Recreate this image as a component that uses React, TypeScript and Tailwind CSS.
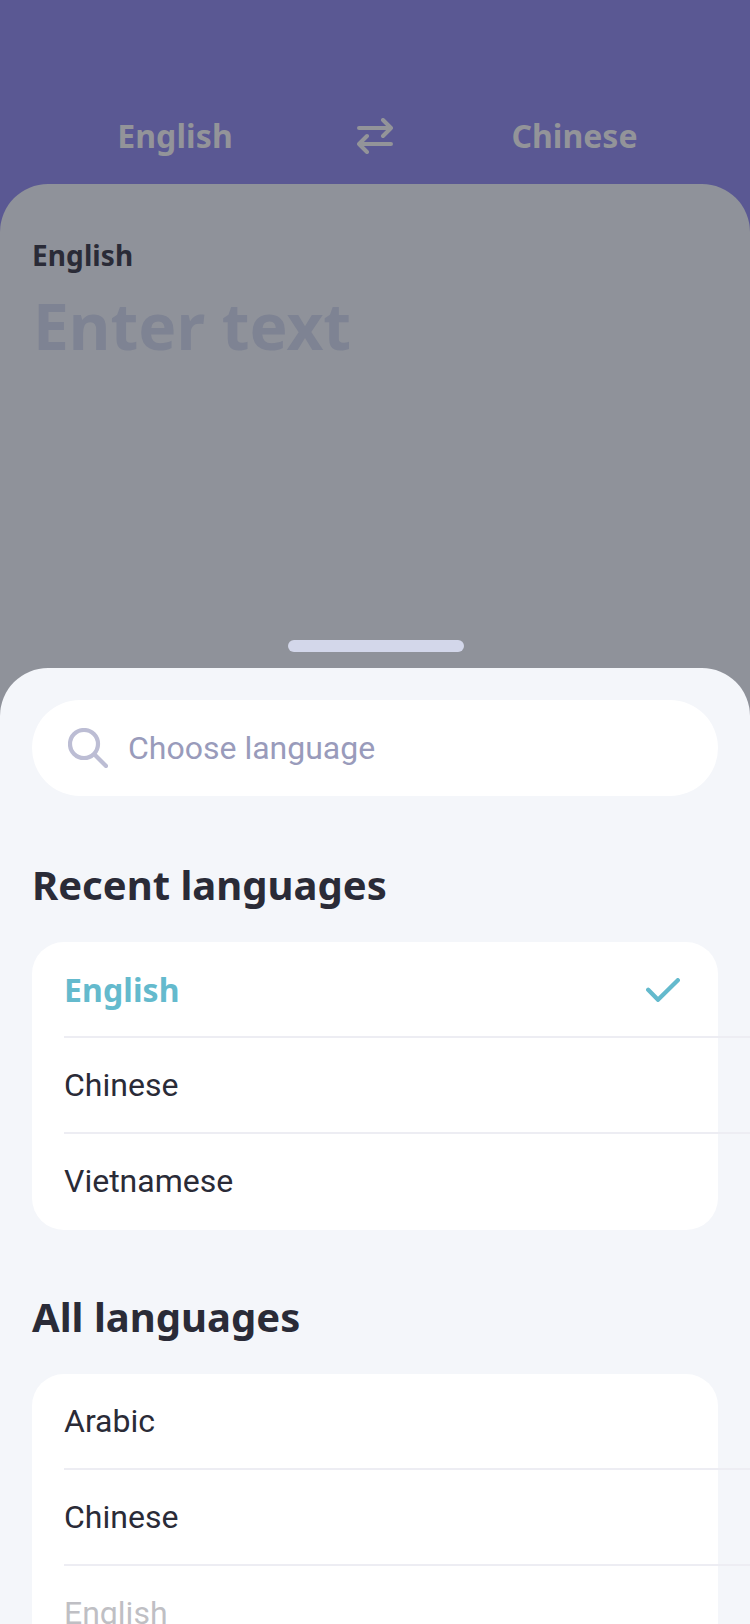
import React from "react";

type Item = { name: string; selected?: boolean; disabled?: boolean };

const recent: Item[] = [
  { name: "English", selected: true },
  { name: "Chinese" },
  { name: "Vietnamese" },
];

const all: Item[] = [
  { name: "Arabic" },
  { name: "Chinese" },
  { name: "English", disabled: true },
];

function SwapIcon() {
  return (
    <svg width="36" height="36" viewBox="0 0 36 36" fill="none" stroke="currentColor" strokeWidth="4" strokeLinecap="round" strokeLinejoin="round">
      <path d="M2 10H34M26 2L34 10L26 18" />
      <path d="M34 26H2M10 18L2 26L10 34" />
    </svg>
  );
}

function SearchIcon() {
  return (
    <svg width="40" height="40" viewBox="0 0 40 40" fill="none" stroke="#bcbdd4" strokeWidth="4.2" strokeLinecap="round">
      <circle cx="16" cy="16" r="14" />
      <path d="M26.5 26.5L38 38" />
    </svg>
  );
}

function CheckIcon() {
  return (
    <svg width="34" height="24" viewBox="0 0 34 24" fill="none" stroke="#64bacd" strokeWidth="4.3" strokeLinecap="round" strokeLinejoin="round">
      <path d="M2.2 11.8L12 21.8L31.8 2.2" />
    </svg>
  );
}

function Row({ item, last }: { item: Item; last: boolean }) {
  const tone = item.selected
    ? "font-['Noto_Sans',sans-serif] font-bold tracking-[0.1px] text-[#64bacd]"
    : item.disabled
      ? "text-[#bfbfc4]"
      : "text-[#2a2b37]";
  return (
    <li
      className={`-mr-8 ml-8 flex h-24 items-center justify-between border-b-2 pr-[70px] text-[32px] leading-[48px] ${item.selected ? "pt-0.5" : ""} ${last ? "border-transparent" : "border-[#ededf3]"}`}
    >
      <span className={tone}>{item.name}</span>
      {item.selected && <CheckIcon />}
    </li>
  );
}

function LanguageList({ items }: { items: Item[] }) {
  return (
    <ul className="mx-8 rounded-[32px] bg-white">
      {items.map((item, i) => (
        <Row key={item.name} item={item} last={i === items.length - 1} />
      ))}
    </ul>
  );
}

export default function App() {
  return (
    <div className="flex h-[1624px] w-[750px] flex-col overflow-hidden bg-[#5a5893] font-[Roboto,sans-serif]">
      <header className="flex h-[184px] shrink-0 items-center pt-[88px] font-['Noto_Sans',sans-serif] text-[32px] leading-[48px] font-bold text-[#939499]">
        <span className="w-[350px] text-center tracking-[0.1px]">English</span>
        <span className="flex w-[50px] justify-center">
          <SwapIcon />
        </span>
        <span className="w-[349px] text-center">Chinese</span>
      </header>

      <section className="flex h-[484px] shrink-0 flex-col rounded-t-[48px] bg-[#8f929a] px-8 pt-[51px] font-['Noto_Sans',sans-serif] font-bold">
        <p className="text-[28px] leading-10 tracking-[0.1px] text-[#2a2b37]">English</p>
        <p className="mt-[11px] ml-px text-[64px] leading-[80px] text-[#7e8393]">Enter text</p>
        <div className="mt-auto mb-4 ml-px h-3 w-44 self-center rounded-full bg-[#d3d7ea]" />
      </section>

      <div className="flex-1 bg-[#8f929a]">
        <main className="h-full rounded-t-[48px] bg-[#f4f6fa] pt-8">
          <div className="mx-8 flex h-24 items-center gap-6 rounded-full bg-white pl-9">
            <SearchIcon />
            <span className="-ml-1 text-[32px] leading-[48px] text-[#999bbb]">Choose language</span>
          </div>
          <h2 className="mx-8 mt-[61px] mb-[29px] font-['Noto_Sans',sans-serif] text-[40px] leading-[56px] font-bold text-[#2a2b37]">
            Recent languages
          </h2>
          <LanguageList items={recent} />
          <h2 className="mx-8 mt-[59px] mb-[29px] font-['Noto_Sans',sans-serif] text-[40px] leading-[56px] font-bold text-[#2a2b37]">
            All languages
          </h2>
          <LanguageList items={all} />
        </main>
      </div>
    </div>
  );
}
